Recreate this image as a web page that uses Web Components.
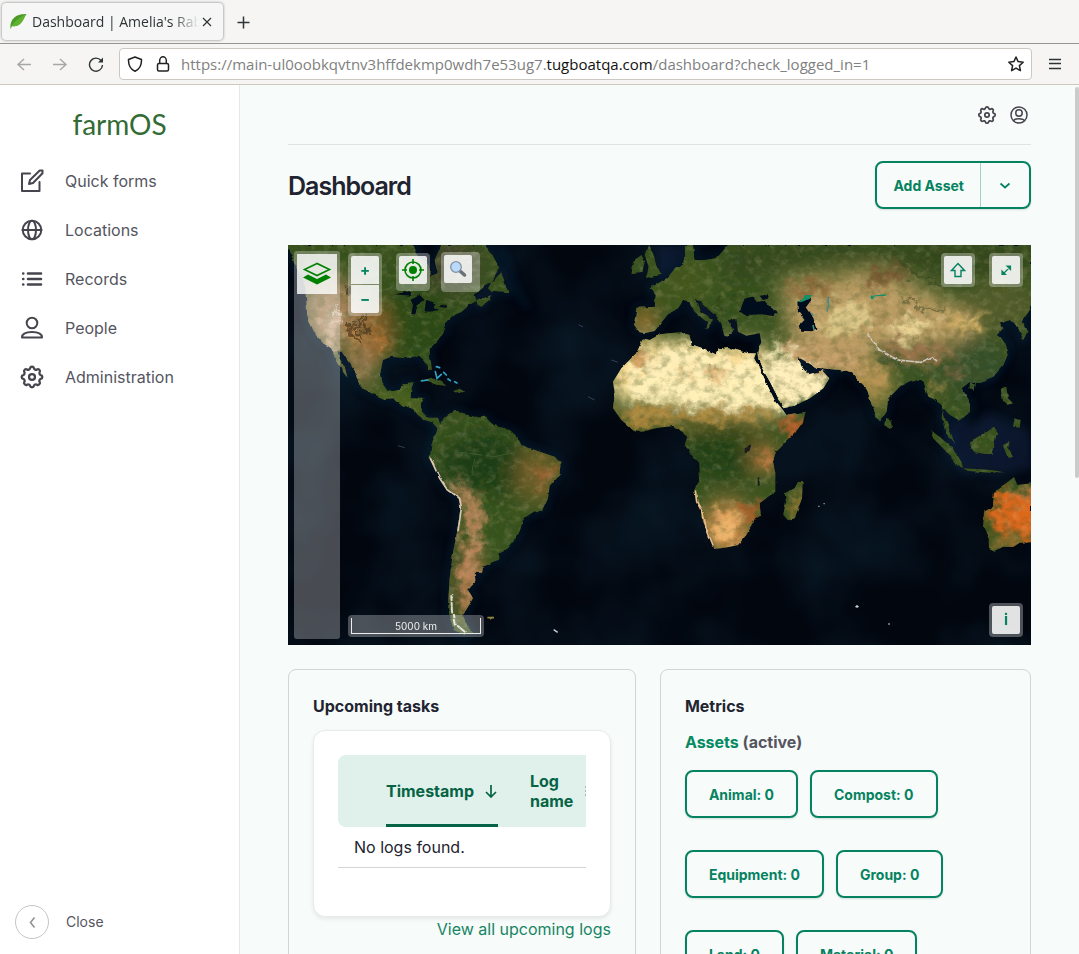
<!DOCTYPE html>
<html lang="en">
<head>
<meta charset="utf-8">
<title>Dashboard | Amelia's Rabbits</title>
<style>
body { margin: 0; font-family: Inter, sans-serif; font-size: 16px; line-height: 24px; color: #222330; }
</style>
</head>
<body>
<farm-window></farm-window>
<script>
const define = (name, html) => {
  const t = document.createElement('template');
  t.innerHTML = '<style>*{box-sizing:border-box}button,a,input{font:inherit;color:inherit}button{border:0;background:none;padding:0}a{text-decoration:none}svg{display:block;flex:none}</style>' + html;
  customElements.define(name, class extends HTMLElement {
    constructor() {
      super();
      this.attachShadow({ mode: 'open' }).append(t.content.cloneNode(true));
    }
  });
};
const gear = 'M10.3 4.3c.4-1.8 3-1.8 3.4 0a1.7 1.7 0 0 0 2.6 1.1c1.5-.9 3.3.8 2.4 2.4a1.7 1.7 0 0 0 1 2.5c1.8.4 1.8 3 0 3.4a1.7 1.7 0 0 0-1 2.6c.9 1.5-.9 3.3-2.4 2.4a1.7 1.7 0 0 0-2.6 1c-.4 1.8-3 1.8-3.4 0a1.7 1.7 0 0 0-2.6-1c-1.5.9-3.3-.9-2.4-2.4a1.7 1.7 0 0 0-1-2.6c-1.8-.4-1.8-3 0-3.4a1.7 1.7 0 0 0 1-2.5c-.9-1.6.9-3.3 2.4-2.4a1.7 1.7 0 0 0 2.6-1.1z';

define('browser-tabs', `
<style>
:host{display:flex;align-items:flex-start;height:44px;padding:3px 2px 0;background:#f6f5f4;border-bottom:1px solid #929590;font:14px/20px "Open Sans",sans-serif;color:#2e3436}
.tab{display:flex;align-items:center;width:221px;height:37px;padding:0 8px;border-radius:4px;background:#f6f6f6;box-shadow:0 0 3px rgba(0,0,0,.5)}
.name{flex:1;margin:1px 0 0 5px;overflow:hidden;white-space:nowrap;-webkit-mask-image:linear-gradient(90deg,#000 84%,transparent);mask-image:linear-gradient(90deg,#000 84%,transparent)}
button{display:grid;place-items:center}
.new{width:40px;height:38px}
</style>
<div class="tab"><svg width="17" height="17" viewBox="0 0 17 17"><path d="M.5 16C-.5 7 5 .5 16.500 1 14 3 12 15 2 13z" fill="#4c9a2a"/><path d="M.5 16C3 9 8 5 16.500 1 14 4 12 15 2 13z" fill="#5fb32f"/></svg>
<span class="name">Dashboard | Amelia's Rabbits</span>
<button aria-label="Close tab"><svg width="16" height="16" viewBox="0 0 16 16"><path d="M4 4l8 8M12 4 4 12" stroke="#2e3436" stroke-width="1.200"/></svg></button></div>
<button class="new" aria-label="New tab"><svg width="16" height="16" viewBox="0 0 16 16"><path d="M8.500 2.500v12M2.500 8.500h12" stroke="#2e3436" stroke-width="1.500"/></svg></button>`);

define('browser-bar', `
<style>
:host{display:flex;align-items:center;height:41px;padding:0 12px;background:#f6f5f4;border-bottom:1px solid #cfc8c0;font:15px/20px "Open Sans",sans-serif;color:#2e3436}
button{display:grid;place-items:center;width:24px;height:24px;margin-right:12px;flex:none}
button svg{fill:none;stroke:currentColor;stroke-width:1.4}
.off{color:#a5a8a7}
.url{flex:1;display:flex;align-items:center;height:32px;margin-left:-1px;padding:0 7px;border:1px solid #cdc7c2;border-radius:4px;background:#fff;white-space:nowrap}
.url svg{fill:none;stroke:#222;stroke-width:1.5;margin-right:12px}
.url svg.star{margin:0}
.text{flex:1;margin-left:-2px;overflow:hidden;color:#7f7f7f}
.text b{font-weight:400;color:#111}
.menu{margin:0 0 0 11px}
</style>
<button class="off" aria-label="Back"><svg width="16" height="16" viewBox="0 0 16 16"><path d="M15 8.500H2M8 3 2 8.500l6 5.500"/></svg></button>
<button class="off" aria-label="Forward"><svg width="16" height="16" viewBox="0 0 16 16"><path d="M1 8.500h13M8 3 14 8.500l-6 5.500"/></svg></button>
<button aria-label="Reload"><svg width="16" height="16" viewBox="0 0 16 16"><path d="M13 4.500a6.500 6.500 0 1 0 1.500 4.500"/><path d="M15 1.500v5h-5z" fill="currentColor" stroke="none"/></svg></button>
<div class="url"><svg width="16" height="16" viewBox="0 0 16 16"><path d="M8 1 14.500 3.500C14.700 9 13 13 8 15.300 3 13 1.300 9 1.500 3.500z" stroke-linejoin="round"/></svg>
<svg width="16" height="16" viewBox="0 0 16 16"><rect x="2.500" y="7.500" width="11" height="7.500" rx="1.500"/><path d="M4.700 7.500V4.500a3.300 3.700 0 0 1 6.600 0v3"/></svg>
<span class="text">https://main-ul0oobkqvtnv3hffdekmp0wdh7e53ug7.<b>tugboatqa.com</b>/dashboard?check_logged_in=1</span>
<svg class="star" width="16" height="16" viewBox="0 0 16 16"><path d="m8 1 2.100 4.600 5.100.6-3.800 3.400 1 5L8 12.100l-4.400 2.500 1-5L.8 6.200l5.100-.6z" stroke-linejoin="round"/></svg></div>
<button class="menu" aria-label="Menu"><svg width="14" height="14" viewBox="0 0 14 14"><path d="M1 2.500h12M1 6.500h12M1 11.500h12"/></svg></button>`);

define('nav-item', `
<style>:host{display:block}a{display:flex;align-items:center;gap:21px;height:49px;padding-left:20px;color:#55555f}
::slotted(svg){display:block;width:24px;height:24px;fill:none;stroke:#45454e;stroke-width:2;stroke-linecap:round;stroke-linejoin:round}</style>
<a href="#"><slot name="icon"></slot><slot></slot></a>`);

define('farm-sidebar', `
<style>
:host{display:flex;flex-direction:column;width:240px;flex:none;background:#fff;border-right:1px solid #e6e8e8}
.logo{display:flex;height:71px;justify-content:center;align-items:center;padding-top:6px;font:28px/36px Lato,sans-serif;color:#336b35}
nav{flex:1}
.close{display:flex;align-items:center;gap:17px;padding:0 15px 15px;font-size:14px;color:#55555f}
.close span{display:grid;place-items:center;width:34px;height:34px;border:1px solid #c5c5c8;border-radius:50%}
</style>
<a class="logo" href="#">farmOS</a>
<nav>
<nav-item><svg slot="icon" viewBox="0 0 24 24"><path d="M10 4.500H2v17.500h17.500v-9M9 15l1-4L19.700 1.500H22.500V4.300L13 14z"/></svg>Quick forms</nav-item>
<nav-item><svg slot="icon" viewBox="0 0 24 24"><circle cx="12" cy="12" r="9.300"/><ellipse cx="12" cy="12" rx="4" ry="9.300"/><path d="M2.500 12h19"/></svg>Locations</nav-item>
<nav-item><svg slot="icon" viewBox="0 0 24 24"><path d="M8 6.500h13M8 12h13M8 17.500h13M3.200 6.500h.1M3.200 12h.1M3.200 17.500h.1" stroke-width="2.600"/></svg>Records</nav-item>
<nav-item><svg slot="icon" viewBox="0 0 24 24"><circle cx="12" cy="7" r="5.300"/><path d="M2 21.500c0-4 4-5.500 10-5.500s10 1.500 10 5.500z"/></svg>People</nav-item>
<nav-item><svg slot="icon" viewBox="1.500 1.500 21 21"><path d="${gear}"/><circle cx="12" cy="12" r="2.600"/></svg>Administration</nav-item>
</nav>
<button class="close"><span><svg width="16" height="16" viewBox="0 0 16 16"><path d="M10.500 3.500 6.500 8.500l4 5" fill="none" stroke="#919197" stroke-width="1.600"/></svg></span>Close</button>`);

define('page-head', `
<style>
:host{display:block}
.tools{display:flex;justify-content:flex-end;align-items:center;gap:12px;height:60px;padding-right:2px;border-bottom:1px solid #dfe3e4}
.tools a{color:#45454e}
.tools svg,.split svg{fill:none;stroke:currentColor}
.row{display:flex;justify-content:space-between;align-items:center;padding:16px 0 36px}
h1{margin:0;padding-top:2px;font-size:25px;line-height:36px;font-weight:600;letter-spacing:-1px;color:#222330}
.split{display:flex;height:48px;border:2px solid #058260;border-radius:8px;color:#058260;font-size:14px;line-height:26px;font-weight:700;box-shadow:0 1px 2px rgba(0,60,40,.15)}
.split button{display:grid;place-items:center;padding:1px 16px 0}
.split button+button{width:49px;padding:0;border-left:1px solid #a4d4c2}
</style>
<div class="tools"><a href="#" aria-label="Settings"><svg width="20" height="20" viewBox="1 1 22 22" stroke-width="1.900"><path d="${gear}"/><circle cx="12" cy="12" r="2.400"/></svg></a>
<a href="#" aria-label="Account"><svg width="20" height="20" viewBox="0 0 20 20" stroke-width="1.500"><circle cx="10" cy="10" r="8"/><circle cx="10" cy="8" r="3.200"/><path d="M4.500 16c1-3 10-3 11 0"/></svg></a></div>
<div class="row"><h1>Dashboard</h1><div class="split"><button>Add Asset</button><button aria-label="More actions"><svg width="12" height="12" viewBox="0 0 12 12" stroke-width="1.700"><path d="m1.500 4.500 4.500 4 4.500-4"/></svg></button></div></div>`);

define('map-button', `
<style>:host{position:absolute;padding:3px;border-radius:4px;background:rgba(255,255,255,.3)}
button{display:grid;place-items:center;width:28px;height:28px;border-radius:2px;background:rgba(255,255,255,.84);color:#058260;font-size:15px;font-weight:700}</style>
<button><slot></slot></button>`);

define('world-map', `
<style>
:host{display:block;position:relative;height:400px;overflow:hidden;background:#020714;color:#eee}
.world{width:100%;height:400px}
.bar,.layers,.zoom,.scale{position:absolute}
.bar{left:6px;top:6px;bottom:6px;width:46px;border-radius:3px;background:rgba(255,255,255,.28)}
.layers{left:9px;top:9px;width:40px;height:40px;display:grid;place-items:center;background:rgba(255,255,255,.8)}
.zoom{left:60px;top:8px;width:34px;padding:3px;display:grid;gap:1px;border-radius:4px;background:rgba(255,255,255,.3)}
.zoom button{height:28px;background:rgba(255,255,255,.84);color:#058260;font-size:15px;line-height:28px;font-weight:700}
.zoom button:first-child{border-radius:2px 2px 0 0}.zoom button:last-child{border-radius:0 0 2px 2px}
.locate{left:108px;top:8px;padding-bottom:7px}
.search{left:153px;top:7px;padding:3px 8px 9px 3px}
.home{right:56px;top:8px}.full{right:8px;top:8px}.info{right:8px;bottom:8px}
.scale{left:60px;bottom:8px;padding:3px;border-radius:4px;background:rgba(255,255,255,.28)}
.scale div{width:130px;height:16px;border:1px solid #eee;border-top:0;text-align:center;font-size:10px;line-height:16px}
</style>
<svg class="world" viewBox="0 0 2229 1200" preserveAspectRatio="xMidYMid slice" role="img" aria-label="World satellite map">
<defs>
<filter id="soft" x="-60%" y="-60%" width="220%" height="220%"><feGaussianBlur stdDeviation="13"/></filter>
<filter id="wide" x="-60%" y="-60%" width="220%" height="220%"><feGaussianBlur stdDeviation="30"/></filter>
<filter id="edge" x="-5%" y="-5%" width="110%" height="110%"><feTurbulence type="fractalNoise" baseFrequency=".04" numOctaves="3" seed="4"/><feDisplacementMap in="SourceGraphic" scale="10" xChannelSelector="R" yChannelSelector="G"/></filter>
<filter id="rough" x="-10%" y="-10%" width="120%" height="120%"><feTurbulence type="fractalNoise" baseFrequency=".025" numOctaves="4" seed="14"/><feDisplacementMap in="SourceGraphic" scale="90" xChannelSelector="R" yChannelSelector="G"/></filter>
<filter id="dark" x="0" y="0" width="100%" height="100%"><feTurbulence type="fractalNoise" baseFrequency=".035 .045" numOctaves="5" seed="9"/><feColorMatrix values="0 0 0 0 .08 0 0 0 0 .1 0 0 0 0 .02 2.400 1.600 0 0 -1.800"/></filter>
<filter id="light" x="0" y="0" width="100%" height="100%"><feTurbulence type="fractalNoise" baseFrequency=".04 .05" numOctaves="5" seed="21"/><feColorMatrix values="0 0 0 0 .95 0 0 0 0 .8 0 0 0 0 .5 2.500 1 0 0 -1.650"/></filter>
<filter id="sea" x="0" y="0" width="100%" height="100%"><feTurbulence type="fractalNoise" baseFrequency=".004" numOctaves="3" seed="3"/><feColorMatrix values="0 0 0 0 .01 0 0 0 0 .07 0 0 0 0 .12 2 0 0 0 -.7"/></filter>
<path id="na" d="M0 0 20 60 50 110 55 170 60 220 80 265 105 295 130 310 145 350 165 380 178 398 172 372 155 340 148 318 162 322 182 352 205 385 218 425 250 445 290 462 315 460 345 480 375 492 390 510 410 525 432 532 450 552 462 545 450 518 420 518 402 500 398 475 410 462 368 460 370 430 378 412 345 415 335 435 300 440 283 415 278 380 285 345 310 335 350 340 395 332 412 350 420 375 432 374 425 330 425 310 455 280 470 265 470 235 490 215 515 205 545 180 560 170 610 150 600 168 580 186 568 178 560 150 590 120 612 112 640 82 662 145 610 140 600 130 635 70 612 28 590 0H460L440 45 450 85 430 92 420 55 390 35 375 0z"/>
<path id="sa" d="M450 545 470 515 500 495 520 505 560 515 590 512 610 535 635 547 665 552 685 570 700 600 755 620 800 635 818 655 815 690 785 725 780 760 765 795 735 805 705 825 695 860 680 885 660 910 632 925 630 945 585 965 582 983 560 983 562 1010 540 1035 555 1060 540 1085 525 1112 540 1145 552 1160 530 1170 500 1155 485 1120 480 1080 485 1000 495 920 508 860 518 780 510 758 470 725 450 680 425 645 430 600z"/>
<path id="af" d="M1065 280 1045 325 1020 350 1000 370 975 410 980 445 975 490 1000 525 1035 555 1060 560 1110 548 1156 543 1180 560 1198 575 1190 600 1210 625 1231 650 1233 710 1219 730 1222 760 1240 790 1245 830 1262 860 1275 895 1278 912 1310 908 1350 900 1375 870 1395 835 1400 820 1418 810 1415 775 1440 755 1462 740 1462 680 1455 650 1465 620 1485 600 1520 565 1545 530 1553 500 1520 505 1495 510 1485 495 1460 465 1440 425 1420 380 1398 340 1404 325 1380 325 1345 315 1320 306 1295 310 1283 328 1250 312 1210 298 1205 270 1180 262 1140 265 1116 268 1085 285zM1530 710 1544 712 1542 760 1520 820 1500 826 1486 810 1494 770 1490 745 1520 730z"/>
<path id="eu" d="M1190 0 1192 48 1158 74 1138 98 1116 112 1085 130 1103 150 1100 185 1045 188 1038 240 1055 262 1072 264 1100 258 1116 238 1140 208 1170 190 1185 168 1205 172 1220 200 1245 222 1258 232 1252 252 1262 248 1275 224 1235 195 1220 160 1240 175 1280 210 1300 235 1308 268 1320 275 1335 258 1320 225 1345 222 1350 260 1375 272 1415 265 1420 292 1408 320 1411 345 1420 365 1446 410 1466 450 1486 490 1520 482 1566 460 1606 430 1624 400 1601 375 1591 385 1561 390 1541 365 1528 335 1546 345 1586 368 1676 377 1696 385 1716 410 1736 430 1751 480 1766 515 1776 530 1796 500 1801 460 1836 425 1876 405 1906 410 1921 455 1936 462 1961 480 1971 520 1991 570 2001 598 1978 570 1964 520 1966 490 1986 510 2016 527 2046 500 2046 470 2021 430 2046 410 2076 410 2116 395 2146 360 2161 325 2151 290 2126 270 2146 250 2136 235 2166 225 2191 250 2206 285 2218 260 2201 230 2229 190V0H1320L1285 40 1250 45 1220 45 1215 0z"/>
<path id="rest" d="M1040 45 1060 30 1070 48 1064 80 1030 85zM1080 0 1095 25 1107 70 1118 90 1074 98 1082 65 1070 30zM2118 740 2160 710 2178 696 2188 720 2229 715V892L2195 893 2175 906 2145 905 2120 920 2103 912 2102 880 2085 845 2088 800 2115 785zM395 408 430 398 460 410 475 422 450 420 420 408zM495 435 515 428 535 440 510 443zM1795 518 1808 528 1812 545 1800 550 1792 540zM1928 555 1960 580 1995 610 2020 650 2025 668 2000 655 1970 615 1935 580zM2025 670 2110 675 2150 682 2105 683 2040 678zM2045 590 2070 575 2118 545 2128 560 2115 610 2110 630 2060 622 2050 610zM2145 600 2165 590 2160 610 2175 635 2160 640 2152 620zM2138 430 2155 425 2160 460 2175 475 2160 480 2145 465zM2180 520 2198 525 2195 548 2175 545zM2046 412 2060 415 2057 437 2045 430z"/>
<clipPath id="land"><use href="#na"/><use href="#sa"/><use href="#af"/><use href="#eu"/><use href="#rest"/></clipPath>
</defs>
<rect width="2229" height="1200" fill="#02060f"/><rect width="2229" height="1200" filter="url(#sea)" opacity=".25"/>
<g fill="none" stroke="#0d2747" stroke-width="12" opacity=".55" filter="url(#soft)"><use href="#na"/><use href="#sa"/><use href="#eu"/><path d="M640 0 680 130 720 190"/></g>
<g fill="#132850" opacity=".4" filter="url(#soft)"><path d="M1960 600 2000 520 2060 540 2100 500 2229 560V670L2110 690 2020 680zM2080 300 2160 330 2110 400 2080 410zM1110 0h70v50l-70 60z"/></g>
<g filter="url(#edge)">
<g clip-path="url(#land)">
<rect width="2229" height="1200" fill="#37511f"/>
<g filter="url(#wide)">
<ellipse cx="390" cy="230" rx="140" ry="110" fill="#2b4a18"/><ellipse cx="490" cy="60" rx="90" ry="80" fill="#40422c"/>
<ellipse cx="130" cy="200" rx="85" ry="110" fill="#a4825a"/><ellipse cx="250" cy="260" rx="50" ry="90" fill="#95652f"/><ellipse cx="215" cy="360" rx="45" ry="60" fill="#a58057"/><ellipse cx="330" cy="475" rx="90" ry="35" fill="#4f681f"/>
<ellipse cx="590" cy="660" rx="130" ry="100" fill="#1c3d14"/><ellipse cx="750" cy="690" rx="65" ry="85" fill="#75602a"/><ellipse cx="590" cy="850" rx="60" ry="110" fill="#34521a"/><ellipse cx="535" cy="1020" rx="38" ry="100" fill="#b57a4a"/>
<path d="M950 290 1420 290 1510 500 1320 480 970 460z" fill="#ffe09a"/><path d="M980 500 1440 505 1430 555 1000 540z" fill="#6f662b"/><ellipse cx="1310" cy="620" rx="130" ry="80" fill="#203f18"/>
<ellipse cx="1320" cy="845" rx="80" ry="80" fill="#cf8a48"/><ellipse cx="1430" cy="640" rx="40" ry="50" fill="#987138"/>
<path d="M1480 110 1780 70 2050 200 2080 250 1980 300 1800 320 1600 380 1500 270z" fill="#b99b62"/><ellipse cx="2140" cy="180" rx="110" ry="80" fill="#515b2b"/>
<path d="M1320 0H2229V60L2000 90 1780 40 1500 50 1320 110z" fill="#30441d"/>
<ellipse cx="1740" cy="420" rx="80" ry="70" fill="#a38b48"/><ellipse cx="2060" cy="370" rx="105" ry="100" fill="#34502a"/>
<ellipse cx="1190" cy="110" rx="90" ry="70" fill="#42571f"/><ellipse cx="1070" cy="230" rx="35" ry="40" fill="#b17936"/>
</g>
<g filter="url(#rough)"><g filter="url(#soft)">
<path d="M1070 320 1220 300 1310 340 1430 350 1500 480 1360 490 1220 480 1000 460z" fill="#fff0b8"/><path d="M1445 310 1530 310 1630 410 1600 470 1500 490 1440 390z" fill="#ffefbc"/>
<ellipse cx="1050" cy="340" rx="35" ry="18" fill="#c2843f"/><ellipse cx="1280" cy="395" rx="22" ry="18" fill="#dca461"/><ellipse cx="1185" cy="380" rx="20" ry="12" fill="#deac68"/>
<path d="M1000 490 1460 500 1460 525 1020 535z" fill="#b18a3e"/>
<ellipse cx="1510" cy="550" rx="30" ry="34" fill="#c4612c"/><ellipse cx="1435" cy="650" rx="22" ry="28" fill="#b8733a"/><ellipse cx="1310" cy="850" rx="42" ry="50" fill="#eeb36a"/><ellipse cx="1390" cy="800" rx="30" ry="22" fill="#b05e2c"/><path d="M1370 870 1420 780 1460 730 1460 790z" fill="#3d5a1e"/>
<path d="M1470 280 1620 310 1720 300 1720 380 1620 380 1520 340z" fill="#c49d68"/><path d="M1640 170 1720 180 1760 230 1680 260 1590 260z" fill="#ddc888"/><ellipse cx="1790" cy="95" rx="60" ry="22" fill="#75522f"/><ellipse cx="1570" cy="130" rx="75" ry="18" fill="#8a6639"/>
<path d="M1795 248 1870 225 1950 225 1920 255 1820 280z" fill="#f0da9b"/><path d="M1960 215 2050 215 2100 190 2070 250 2020 260z" fill="#deb86b"/><path d="M1790 280 1920 295 1990 320 1960 350 1870 350 1800 320z" fill="#99734b"/>
<path d="M1760 300 1870 370 1970 370 1990 395 1860 392 1780 360z" fill="#3a5229"/><ellipse cx="1755" cy="385" rx="45" ry="35" fill="#bb9554"/><ellipse cx="2005" cy="390" rx="16" ry="20" fill="#7f6440"/><ellipse cx="1945" cy="435" rx="12" ry="28" fill="#9b8444"/>
<ellipse cx="2200" cy="800" rx="110" ry="75" fill="#dc681f"/><ellipse cx="2160" cy="895" rx="50" ry="12" fill="#b87d35"/><ellipse cx="2205" cy="740" rx="28" ry="14" fill="#aa7840"/>
<ellipse cx="1530" cy="775" rx="14" ry="50" fill="#9c7a31"/><ellipse cx="775" cy="690" rx="30" ry="34" fill="#9f6431"/><ellipse cx="205" cy="275" rx="24" ry="34" fill="#c38849"/><ellipse cx="270" cy="295" rx="18" ry="40" fill="#b07337"/><ellipse cx="130" cy="250" rx="26" ry="60" fill="#d2b08f"/>
<path d="M470 700 535 730 580 770 575 860 580 990 545 1090 525 1090 535 790z" fill="#bd875b"/><path d="M490 900 512 900 508 1140 482 1110z" fill="#344b24"/>
</g></g>
<rect width="2229" height="1200" filter="url(#dark)" opacity=".32"/><rect width="2229" height="1200" filter="url(#light)" opacity=".15"/>
</g>
<g fill="#04091b"><path d="M1355 200 1370 160 1395 155 1405 170 1430 168 1440 180 1470 205 1455 213 1420 208 1375 210zM1415 152 1435 150 1442 160 1425 165zM1528 170 1560 150 1570 165 1555 185 1575 215 1585 250 1570 262 1540 260 1535 240 1550 225 1530 200z"/><path d="M368 165 395 150 410 165 390 175 382 208 370 208 375 180zM415 165 445 175 430 200 410 195zM410 202 445 188 452 195zM450 186 480 178 475 188zM320 148 365 138 370 152z"/><path d="M1370 610 1390 600 1385 620 1370 625z" opacity=".7"/></g>
<path d="M1530 170 1552 150 1572 150 1565 162 1535 172zM1747 152 1795 148 1792 153 1762 154 1756 166z" fill="#128f69"/><path d="M1620 155 1622 180 1617 200M1570 205 1578 215M1575 240 1578 255" stroke="#4d8a80" stroke-width="5" fill="none"/>
<g fill="none" stroke-linecap="round"><path d="M427 640 455 700 475 730 515 760 520 790 510 860" stroke="#dcc6b0" stroke-width="5"/><path d="M490 1050 492 1100 500 1135 530 1160" stroke="#dcdcd4" stroke-width="6" stroke-dasharray="16 8 8 5"/><path d="M1222 735 1226 770 1245 805 1255 850 1275 900" stroke="#e5bd88" stroke-width="5"/><path d="M1740 270 1775 315 1830 345 1900 352 1930 335 1950 350" stroke="#cfc9bd" stroke-width="5" stroke-dasharray="10 6 5 5"/><path d="M500 620 620 635 690 620M560 640 550 690" stroke="#3b5a30" stroke-width="3"/><path d="M1412 700 1412 720" stroke="#15231b" stroke-width="6"/></g>
<g filter="url(#rough)" fill="none" stroke-linecap="round"><path d="M190 230 200 290M225 220 230 275M205 215 210 305M180 120 190 180" stroke="#42351e" stroke-width="10" opacity=".7"/><path d="M150 170 135 230M155 215 165 230" stroke="#ddd0c0" stroke-width="5"/><path d="M1250 170 1310 190 1300 150M1840 70 1960 130M1850 160 1980 200" stroke="#27371a" stroke-width="9" opacity=".4"/></g>
</g>
<g stroke="#31a2c6" stroke-width="5" fill="none" stroke-linecap="round"><path d="M445 365 455 368M442 380 447 400 460 388M475 390l-8-8M480 402 487 407M500 410 507 414M400 408 420 405"/></g>
<g stroke="#c3d3da" stroke-width="4"><path d="M1702 1085h10M1707 1080v8M1801 1137h4M797 1154 809 1162"/><path d="M1590 784h5M1606 776h5" opacity=".6"/></g><path d="M598 1118h20M606 1122 614 1116" stroke="#8d8240" stroke-width="5"/>
<g stroke="#51607c" stroke-width="3" opacity=".6"><path d="M970 345 990 352M900 455 920 465M872 240 885 245M330 602 350 608"/></g>
</svg>
<div class="bar"></div>
<button class="layers" aria-label="Layers"><svg width="30" height="24" viewBox="0 0 30 24"><path d="M1 15.500 6 12.500l9 4.500 9-4.500 5 3L15 22.500z" fill="#008000"/><path d="M15 1.500 2.500 7.500 15 13.500 27.500 7.500z" fill="none" stroke="#008000" stroke-width="1.600"/></svg></button>
<div class="zoom"><button aria-label="Zoom in">+</button><button aria-label="Zoom out">−</button></div>
<map-button class="locate"><svg width="22" height="22" viewBox="0 0 22 22"><circle cx="11" cy="11" r="4" fill="#008000"/><g fill="none" stroke="#008000" stroke-width="1.600"><circle cx="11" cy="11" r="8"/><path d="M11 0v5M11 17v5M0 11h5M17 11h5"/></g></svg></map-button>
<map-button class="search"><svg width="18" height="18" viewBox="0 0 18 18"><path d="m11 11 4.500 4" stroke="#697179" stroke-width="3.500" stroke-linecap="round"/><circle cx="7" cy="7" r="5.300" fill="#b9dafa" stroke="#8594a4" stroke-width="1.300"/></svg></map-button>
<map-button class="home"><svg width="16" height="16" viewBox="0 0 16 16"><path d="M8 1.500 14.500 8.500H11V14.500H5V8.500H1.500z" fill="none" stroke="#058260" stroke-width="1.400"/></svg></map-button>
<map-button class="full"><svg width="12" height="12" viewBox="0 0 12 12"><path d="M7 2H10.500V5.500zM2 7V10.500h3.500zM3 10 10 3" fill="#058260" stroke="#058260" stroke-width="1.200"/></svg></map-button>
<map-button class="info">i</map-button>
<div class="scale"><div>5000 km</div></div>`);

define('dash-card', `
<style>:host{display:block;min-width:0;padding:24px;border:1px solid #d2d5d7;border-radius:8px}h2{margin:0 0 12px;font-size:16px;line-height:24px;font-weight:700}</style>
<h2><slot name="title"></slot></h2><slot></slot>`);

define('task-list', `
<style>
:host{display:block}
.panel{padding:24px 24px 48px;border:1px solid #e6eaea;border-radius:12px;background:#fff;box-shadow:0 2px 4px rgba(0,30,20,.08)}
.clip{overflow:hidden}
table{width:416px;border-spacing:0;table-layout:fixed}
th{height:72px;padding:0 16px;background:#e0f0ea;color:#056445;font-weight:700;line-height:20px;text-align:left}
th:first-child{width:32px;border-radius:8px 0 0 8px}
th:nth-child(2){width:144px}th:nth-child(3){width:84px;padding-right:0}
th a{display:flex;align-items:center;justify-content:space-between;height:72px}
th.on a{border-bottom:3px solid #056445;padding-top:3px}
td{height:41px;padding:0 16px;border-bottom:1px solid #d2d5d7}
.all{display:block;text-align:right;color:#168562}
</style>
<div class="panel"><div class="clip"><table><thead><tr><th></th><th class="on"><a href="#">Timestamp<svg width="14" height="14" viewBox="0 0 14 14"><path d="M7 1v12M2 8l5 5 5-5" fill="none" stroke="currentColor" stroke-width="1.700"/></svg></a></th><th><a href="#">Log name<svg width="13" height="12" viewBox="0 0 13 12"><path d="M0 2h12M0 6h9M0 10h6" stroke="#97aba3" stroke-width="1.500"/></svg></a></th><th></th></tr></thead><tbody><tr><td colspan="4">No logs found.</td></tr></tbody></table></div></div>
<a class="all" href="#">View all upcoming logs</a>`);

define('asset-metrics', `
<style>
:host{display:block}
h3{margin:0 0 16px;font-size:16px;line-height:24px;font-weight:700;color:#55555f}h3 a{color:#058a63}
.row{display:flex;gap:12px;margin-bottom:32px}
.row a{height:48px;padding:1px 22px 0;border:2px solid #058260;border-radius:8px;color:#058260;font-size:14px;line-height:44px;font-weight:700;box-shadow:0 1px 2px rgba(0,60,40,.15)}
</style>
<h3><a href="#">Assets</a> (active)</h3>
<div class="row"><a href="#">Animal: 0</a><a href="#">Compost: 0</a></div>
<div class="row"><a href="#">Equipment: 0</a><a href="#">Group: 0</a></div>
<div class="row"><a href="#">Land: 0</a><a href="#">Material: 0</a></div>`);

define('farm-window', `
<style>
:host{display:flex;flex-direction:column;height:100vh;overflow:hidden}
browser-tabs,browser-bar{flex:none}
.app{position:relative;flex:1;display:flex;min-height:0}
main{flex:1;min-width:0;padding:0 48px;overflow:hidden;background:#f7fbfa}
.cards{display:grid;grid-template-columns:15fr 16fr;gap:24px;margin-top:24px}
.thumb{position:absolute;right:0;top:2px;width:4px;height:45%;border-radius:2px;background:#cacbcb}
</style>
<browser-tabs></browser-tabs><browser-bar></browser-bar>
<div class="app"><farm-sidebar></farm-sidebar><main><page-head></page-head><world-map></world-map>
<div class="cards"><dash-card><span slot="title">Upcoming tasks</span><task-list></task-list></dash-card><dash-card><span slot="title">Metrics</span><asset-metrics></asset-metrics></dash-card></div></main><div class="thumb"></div></div>`);
</script>
</body>
</html>
